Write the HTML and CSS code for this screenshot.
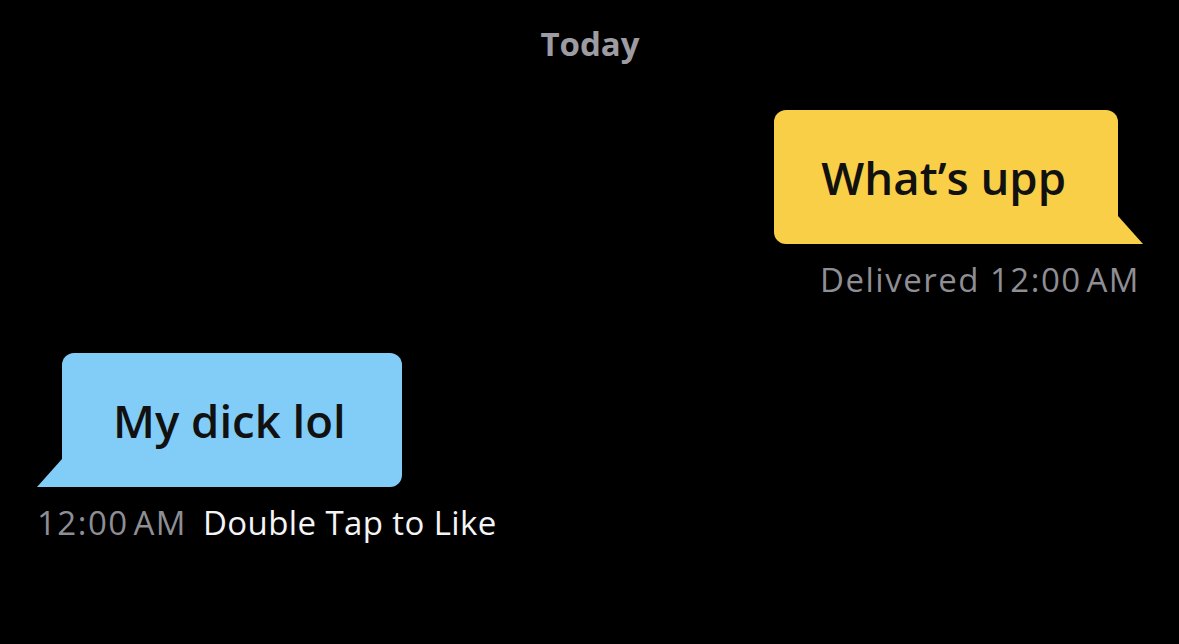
FILE: index.html
```html
<!DOCTYPE html>
<html lang="en">

<head>
  <meta charset="UTF-8">
  <meta name="viewport" content="width=device-width, initial-scale=1.0">
  <title>Chat</title>
  <link rel="stylesheet" href="styles.css">
</head>

<body>
  <main class="chat">
    <div class="day">Today</div>

    <div class="message outgoing">
      <div class="bubble">What’s upp</div>
      <div class="meta">Delivered 12:00&#8202;AM</div>
    </div>

    <div class="message incoming">
      <div class="bubble">My dick lol</div>
      <div class="meta"><span class="time">12:00&#8202;AM</span><span class="like">Double Tap to Like</span></div>
    </div>
  </main>
</body>
</html>
```

FILE: styles.css
```css
:root {
  --black: #000;
  --yellow: #f8cf46;
  --blue: #82cdf8;
  --gray: #8e8e94;
  --light-gray: #9c9ca2;
  --white: #f4f4f6;
}

body {
  background-color: var(--black);
  margin: 0;
  padding: 0;
}

* {
  font-family: 'Open Sans', 'Noto Sans', sans-serif;
  box-sizing: border-box;
}

.chat {
  display: flex;
  flex-direction: column;
  padding: 21px 36px 0 37px;
}

.day {
  text-align: center;
  color: var(--light-gray);
  font-weight: 700;
  font-size: 33px;
  line-height: 46px;
}

.message {
  display: flex;
  flex-direction: column;
}

.outgoing {
  align-items: flex-end;
  margin-top: 43px;
  padding-right: 25px;
}

.incoming {
  align-items: flex-start;
  margin-top: 50px;
  padding-left: 25px;
}

.bubble {
  position: relative;
  height: 134px;
  display: flex;
  align-items: center;
  padding: 0 56px 0 51px;
  font-size: 45.5px;
  font-weight: 600;
  color: #111;
  border-radius: 12px;
}

.outgoing .bubble {
  padding: 0 52px 0 47px;
  background-color: var(--yellow);
  border-bottom-right-radius: 0;
}

.incoming .bubble {
  background-color: var(--blue);
  border-bottom-left-radius: 0;
}

/* tail */
.bubble::after {
  content: '';
  position: absolute;
  bottom: 0;
  width: 25px;
  height: 28px;
  background-color: inherit;
}

.outgoing .bubble::after {
  right: -25px;
  clip-path: polygon(0 0, 100% 100%, 0 100%);
}

.incoming .bubble::after {
  left: -25px;
  clip-path: polygon(100% 0, 100% 100%, 0 100%);
}

.meta {
  margin-top: 13px;
  font-size: 33px;
  line-height: 46px;
  color: var(--gray);
  display: flex;
  gap: 16px;
}

.outgoing .meta {
  margin-right: -22px;
  letter-spacing: 1.5px;
}

.incoming .meta {
  margin-left: -25px;
}

.time {
  letter-spacing: 1.5px;
}

.like {
  color: var(--white);
  letter-spacing: 0.4px;
}
```
